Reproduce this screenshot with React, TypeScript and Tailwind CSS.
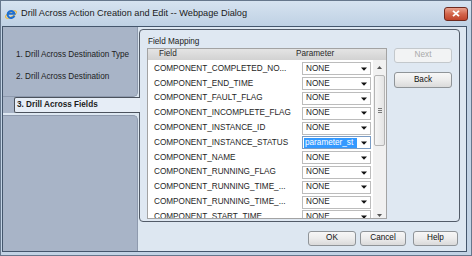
import React from "react";

const rows: { field: string; value: string; selected?: boolean }[] = [
  { field: "COMPONENT_COMPLETED_NO...", value: "NONE" },
  { field: "COMPONENT_END_TIME", value: "NONE" },
  { field: "COMPONENT_FAULT_FLAG", value: "NONE" },
  { field: "COMPONENT_INCOMPLETE_FLAG", value: "NONE" },
  { field: "COMPONENT_INSTANCE_ID", value: "NONE" },
  { field: "COMPONENT_INSTANCE_STATUS", value: "parameter_st", selected: true },
  { field: "COMPONENT_NAME", value: "NONE" },
  { field: "COMPONENT_RUNNING_FLAG", value: "NONE" },
  { field: "COMPONENT_RUNNING_TIME_...", value: "NONE" },
  { field: "COMPONENT_RUNNING_TIME_...", value: "NONE" },
  { field: "COMPONENT_START_TIME", value: "NONE" },
];

function DownArrow() {
  return (
    <svg width="6" height="4" viewBox="0 0 6 4" className="shrink-0">
      <path d="M0 0.5H6L3 3.8Z" fill="#111" />
    </svg>
  );
}

function IeIcon() {
  return (
    <svg width="12" height="12" viewBox="0 0 12 12" className="shrink-0">
      <ellipse cx="6" cy="6.5" rx="6" ry="2.3" transform="rotate(-30 6 6.5)" fill="none" stroke="#f0b429" strokeWidth="1" />
      <path d="M9.4 7.6A3.5 3.5 0 1 1 9.5 5.7H3" fill="none" stroke="#1f6fd0" strokeWidth="2" />
    </svg>
  );
}

function Btn({ label, disabled, className }: { label: string; disabled?: boolean; className: string }) {
  return (
    <div
      className={`flex items-center justify-center rounded-[3px] border text-[8.2px] leading-none ${
        disabled
          ? "border-[#c3c8cc] bg-[#f2f3f4] text-[#a9a9a9]"
          : "border-[#8f9498] bg-linear-to-b from-[#f7f7f7] via-[#ececec] to-[#dadada] text-[#111]"
      } ${className}`}
    >
      {label}
    </div>
  );
}

export default function App() {
  return (
    <div className="w-[472px] h-[256px] overflow-hidden border border-[#66778c] bg-[#c2d3e5] flex flex-col font-['Liberation_Sans',Arial,sans-serif]">
      {/* title bar */}
      <div className="h-[25px] shrink-0 flex items-center pl-[4px] pr-[3px] bg-linear-to-b from-[#d6e3f0] to-[#bfd1e4]">
        <IeIcon />
        <span className="ml-[4px] text-[9.2px] text-[#1a1a1a] whitespace-nowrap">
          Drill Across Action Creation and Edit -- Webpage Dialog
        </span>
        <div className="ml-auto w-[24px] h-[14px] rounded-[3px] border border-[#6e2a1f] bg-linear-to-b from-[#e9a18d] via-[#d3654b] to-[#c0442b] flex items-center justify-center">
          <svg width="8" height="7" viewBox="0 0 8 7">
            <path d="M1 0.8L7 6.2M7 0.8L1 6.2" stroke="#fff" strokeWidth="1.8" />
          </svg>
        </div>
      </div>

      {/* client */}
      <div className="ml-[1px] w-[465px] h-[226px] shrink-0 border border-[#44566c] bg-[#dde7f1] flex">
        {/* sidebar */}
        <div className="w-[136px] shrink-0 flex flex-col text-[8.2px] text-[#1c1c1c]">
          <div className="w-[135px] h-[70px] bg-[#a8b4c7] border-r border-b border-[#8e9aae] rounded-br-[5px] pl-[13px] pt-[23px] leading-[10px]">
            <div className="whitespace-nowrap">1. Drill Across Destination Type</div>
            <div className="mt-[12px] whitespace-nowrap">2. Drill Across Destination</div>
          </div>
          <div className="h-[16px] flex relative z-10 mr-[-1px]">
            <div className="w-[11px] bg-[#a8b4c7]" />
            <div className="flex-1 flex items-center pl-[2px] bg-[#e6edf6] border-l border-t border-b border-[#4b525d] rounded-l-[2px] font-bold whitespace-nowrap">
              3. Drill Across Fields
            </div>
          </div>
          <div className="mt-[2px] flex-1 w-[135px] bg-[#a8b4c7] border-r border-t border-[#8e9aae] rounded-tr-[5px]" />
        </div>

        {/* main */}
        <div className="flex-1 flex flex-col">
          <div className="mt-[2px] w-[321px] h-[193px] border border-[#525b68] rounded-[4px] bg-[#dfe8f2] flex flex-col">
            <div className="h-[18px] pl-[8px] pt-[6px] text-[8.2px] leading-[12px] text-[#1c1c1c]">Field Mapping</div>
            <div className="flex">
              {/* table */}
              <div className="ml-[7px] w-[240px] h-[171px] border border-[#a3a3a3] bg-white flex flex-col overflow-hidden">
                <div className="h-[11px] shrink-0 flex items-center bg-linear-to-b from-[#e4e4e4] to-[#d2d2d2] text-[8.2px] text-[#2a2a2a]">
                  <div className="w-[148px] pl-[11px]">Field</div>
                  <div>Parameter</div>
                </div>
                <div className="flex-1 flex overflow-hidden">
                  <div className="w-[225px] pt-[1.6px] flex flex-col">
                    {rows.map((r, i) => (
                      <div key={i} className="h-[14.8px] shrink-0 flex items-center text-[8.2px] text-[#1e1e1e]">
                        <div className="w-[154px] pl-[6px] whitespace-nowrap">{r.field}</div>
                        <div
                          className={`w-[69px] h-[13px] border bg-white flex items-center pr-[3px] ${
                            r.selected ? "border-[#7a9cc4] pl-[1px]" : "border-[#bcbcbc] pl-[3px]"
                          }`}
                        >
                          {r.selected ? (
                            <span className="w-[53px] h-[10px] flex items-center pl-[1px] bg-[#3399ff] text-white">{r.value}</span>
                          ) : (
                            <span>{r.value}</span>
                          )}
                          <span className="ml-auto flex">
                            <DownArrow />
                          </span>
                        </div>
                      </div>
                    ))}
                  </div>
                  {/* scrollbar */}
                  <div className="w-[13px] h-[162px] shrink-0 bg-[#f1f1f1] flex flex-col">
                    <div className="h-[14px] flex items-center justify-center">
                      <svg width="5" height="3" viewBox="0 0 5 3">
                        <path d="M0 3H5L2.5 0Z" fill="#555" />
                      </svg>
                    </div>
                    <div className="mt-[1px] mx-[1px] h-[71px] rounded-[2px] border border-[#b4b4b4] bg-linear-to-r from-[#f6f6f6] to-[#e4e4e4] flex flex-col items-center justify-center gap-[1px]">
                      <div className="w-[4px] h-[1px] bg-[#7a7a7a]" />
                      <div className="w-[4px] h-[1px] bg-[#7a7a7a]" />
                      <div className="w-[4px] h-[1px] bg-[#7a7a7a]" />
                    </div>
                    <div className="flex-1" />
                    <div className="h-[14px] flex items-center justify-center">
                      <svg width="5" height="3" viewBox="0 0 5 3">
                        <path d="M0 0H5L2.5 3Z" fill="#555" />
                      </svg>
                    </div>
                  </div>
                </div>
              </div>
              {/* side buttons */}
              <div className="ml-[7px] flex flex-col">
                <Btn label="Next" disabled className="w-[58px] h-[15px]" />
                <Btn label="Back" className="mt-[9px] w-[58px] h-[16px]" />
              </div>
            </div>
          </div>
          <div className="mt-[9px] flex justify-end pr-[8px]">
            <Btn label="OK" className="w-[48px] h-[15px]" />
            <Btn label="Cancel" className="ml-[4px] w-[46px] h-[15px]" />
            <Btn label="Help" className="ml-[7px] w-[45px] h-[15px]" />
          </div>
        </div>
      </div>
    </div>
  );
}
